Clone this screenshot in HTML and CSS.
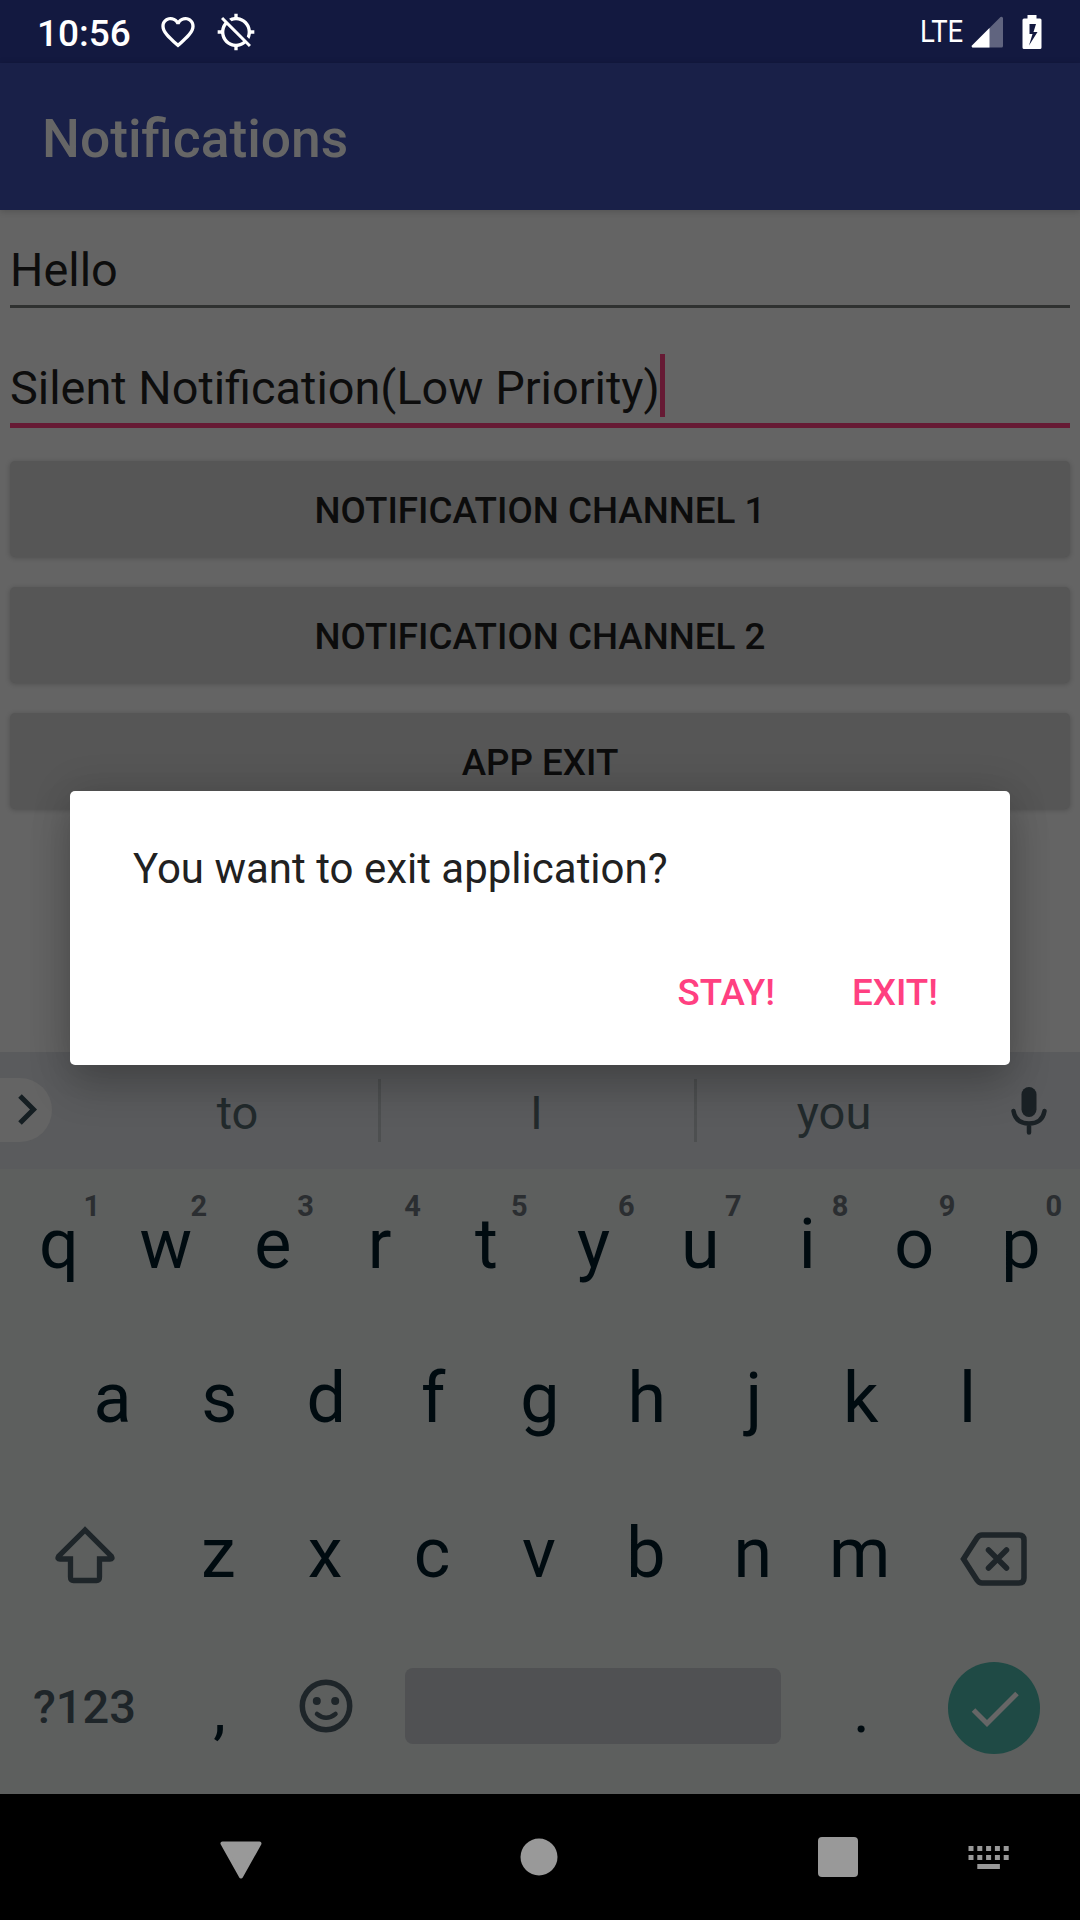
FILE: index.html
```html
<!DOCTYPE html>
<html lang="en">
<head>
<meta charset="utf-8">
<title>Notifications</title>
<link rel="stylesheet" href="styles.css">
</head>
<body>
<div class="screen">
  <header class="status">
    <span class="clock">10:56</span>
    <svg class="heart" width="40" height="40" viewBox="0 0 24 24"><path fill="#fff" d="M16.5 3c-1.740 0-3.410.810-4.500 2.090C10.910 3.810 9.240 3 7.500 3 4.420 3 2 5.420 2 8.500c0 3.780 3.400 6.860 8.550 11.540L12 21.350l1.450-1.320C18.600 15.360 22 12.280 22 8.500 22 5.420 19.580 3 16.500 3zm-4.400 15.550l-.1.100-.1-.1C7.140 14.240 4 11.390 4 8.500 4 6.500 5.500 5 7.500 5c1.540 0 3.040.990 3.570 2.360h1.870C13.460 5.990 14.960 5 16.500 5c2 0 3.500 1.500 3.500 3.500 0 2.890-3.140 5.740-7.900 10.050z"/></svg>
    <svg class="gps" width="40" height="40" viewBox="0 0 24 24"><path fill="#fff" d="M20.940 11c-.460-4.170-3.770-7.480-7.940-7.940V1h-2v2.060c-1.130.120-2.190.460-3.160.970l1.500 1.500C10.160 5.190 11.060 5 12 5c3.870 0 7 3.130 7 7 0 .940-.190 1.840-.520 2.650l1.500 1.500c.5-.960.840-2.020.970-3.150H23v-2h-2.060zM3 4.270l2.040 2.040C3.970 7.620 3.250 9.230 3.060 11H1v2h2.060c.460 4.170 3.770 7.480 7.940 7.940V23h2v-2.060c1.770-.2 3.380-.910 4.690-1.980L19.730 21 21 19.730 4.270 3 3 4.270zm13.270 13.270C15.090 18.450 13.610 19 12 19c-3.870 0-7-3.130-7-7 0-1.610.550-3.090 1.460-4.270l9.810 9.810z"/></svg>
    <span class="lte">LTE</span>
    <svg class="signal" width="32" height="32" viewBox="0 0 32 32"><path fill="#fff" fill-opacity=".33" d="M32 2v28q0 1.500-1.500 1.500H1.500Q0 31 1 29.500L29.500 1Q31 0 32 2z"/><path fill="#fff" d="M18.500 12v19.500H1.500Q0 31 1 29.500z"/></svg>
    <svg class="battery" width="20" height="34" viewBox="0 0 20 34"><path fill="#fff" fill-rule="evenodd" d="M5.500 0h9v3.500H18q1.500 0 1.500 1.500v27.500Q19.500 34 18 34H2Q.500 34 .500 32.500V5Q.500 3.500 2 3.500h3.500zM7.500 9v10h3L7 30.500 15.500 17H11.500L14 9z"/></svg>
  </header>
  <div class="appbar"><h1>Notifications</h1></div>

  <main class="content">
    <div class="field">Hello</div>
    <div class="field focused">Silent Notification(Low Priority)<i class="caret"></i></div>
    <div class="buttons">
      <div class="button">NOTIFICATION CHANNEL 1</div>
      <div class="button">NOTIFICATION CHANNEL 2</div>
      <div class="button">APP EXIT</div>
    </div>
  </main>

  <section class="keyboard">
    <div class="strip">
      <div class="more"><svg width="52" height="64" viewBox="0 0 52 64"><path d="M20 18l13.500 13.500L20 45" fill="none" stroke="#151e22" stroke-width="5"/></svg></div>
      <span class="word first">to</span>
      <span class="word mid">I</span>
      <span class="word last">you</span>
      <svg class="mic" width="36" height="48" viewBox="0 0 36 48"><rect x="10.500" y="0" width="15" height="30" rx="7.500" fill="#1a2125"/><path d="M2.500 24C4 33 10 36.500 18 36.500S32 33 33.500 24M18 37v8.500" fill="none" stroke="#1a2125" stroke-width="4.500" stroke-linecap="round"/></svg>
    </div>
    <div class="keys">
      <div class="row">
        <span class="key">q<sup>1</sup></span><span class="key">w<sup>2</sup></span><span class="key">e<sup>3</sup></span><span class="key">r<sup>4</sup></span><span class="key">t<sup>5</sup></span><span class="key">y<sup>6</sup></span><span class="key">u<sup>7</sup></span><span class="key">i<sup>8</sup></span><span class="key">o<sup>9</sup></span><span class="key">p<sup>0</sup></span>
      </div>
      <div class="row">
        <span class="key">a</span><span class="key">s</span><span class="key">d</span><span class="key">f</span><span class="key">g</span><span class="key">h</span><span class="key">j</span><span class="key">k</span><span class="key">l</span>
      </div>
      <div class="row third">
        <span class="key wide"><svg class="shift" width="60" height="58" viewBox="0 0 60 58"><path d="M30 4L3.500 30.500Q2 33 5 33H15.500V51Q15.500 54.500 18.500 54.500H41.500Q44.500 54.500 44.500 51V33H55Q58 33 56.500 30.500Z" fill="none" stroke="#1e2529" stroke-width="5.300"/></svg></span>
        <span class="key">z</span><span class="key">x</span><span class="key">c</span><span class="key">v</span><span class="key">b</span><span class="key">n</span><span class="key">m</span>
        <span class="key wide"><svg class="del" width="68" height="54" viewBox="0 0 68 54"><path d="M3.500 27L17 6Q19 3 22 3H59Q64 3 64 8V46Q64 51 59 51H22Q19 51 17 48ZM28.500 18l18 18M46.500 18l-18 18" fill="none" stroke="#1e2529" stroke-width="5.500" stroke-linecap="round"/></svg></span>
      </div>
      <div class="row bottom">
        <span class="key wide symbols">?123</span>
        <span class="key punct">,</span>
        <span class="key"><svg class="smile" width="54" height="54" viewBox="0 0 54 54"><circle cx="27" cy="27" r="23.700" fill="none" stroke="#1e2529" stroke-width="5.500"/><circle cx="17.800" cy="22" r="4" fill="#1e2529"/><circle cx="36.200" cy="22" r="4" fill="#1e2529"/><path d="M18 35q9 7.500 18.500 0" fill="none" stroke="#1e2529" stroke-width="4.500" stroke-linecap="round"/></svg></span>
        <span class="space"></span>
        <span class="key punct">.</span>
        <span class="key wide"><svg class="done" width="92" height="92" viewBox="0 0 92 92"><circle cx="46" cy="46" r="46" fill="#1f4a45"/><path d="M25.500 48l13.500 13.500L69 31.500" fill="none" stroke="#666" stroke-width="5"/></svg></span>
      </div>
    </div>
  </section>

  <nav class="navbar">
    <svg width="42" height="38" viewBox="0 0 42 38"><path d="M2.500 2.500H39.500L21 35.500Z" fill="#999" stroke="#999" stroke-width="4" stroke-linejoin="round"/></svg>
    <svg width="38" height="38" viewBox="0 0 38 38"><circle cx="19" cy="19" r="18.500" fill="#999"/></svg>
    <svg width="40" height="40" viewBox="0 0 40 40"><rect width="40" height="40" rx="4" fill="#999"/></svg>
    <svg width="41" height="24" viewBox="0 0 41 24"><path fill="#999" d="M.5 0h5v5h-5zM9.300 0h5v5h-5zM18.100 0h5v5h-5zM26.900 0h5v5h-5zM35.700 0h5v5h-5zM.5 9h5v5h-5zM9.300 9h5v5h-5zM18.100 9h5v5h-5zM26.900 9h5v5h-5zM35.700 9h5v5h-5zM9.300 18h22.600v5H9.300z"/></svg>
  </nav>

  <div class="dialog" role="dialog">
    <p>You want to exit application?</p>
    <div class="actions"><span>STAY!</span><span>EXIT!</span></div>
  </div>
</div>
</body>
</html>
```
FILE: styles.css
```css
* { box-sizing: border-box; }

body {
  margin: 0;
  font-family: Roboto, "Liberation Sans", sans-serif;
}

svg { display: block; flex: none; }

.screen {
  position: relative;
  display: flex;
  flex-direction: column;
  width: 1080px;
  height: 1920px;
  overflow: hidden;
  background: #646464;
}

/* Status bar */
.status {
  display: flex;
  align-items: center;
  height: 63px;
  padding: 0 38px 0 37px;
  background: #131940;
  color: #fff;
}
.clock {
  width: 121px;
  padding-top: 3px;
  font-size: 37px;
  font-weight: 500;
}
.gps { margin-left: 18px; }
.lte {
  width: 45px;
  margin-left: auto;
  font-size: 32px;
  line-height: 63px;
  transform: scaleX(.86);
  transform-origin: 0 50%;
}
.signal { margin-left: 6px; }
.battery { margin-left: 19px; }

/* App bar */
.appbar {
  position: relative;
  display: flex;
  align-items: center;
  height: 147px;
  padding: 3px 42px 0;
  background: #192048;
  box-shadow: 0 1px 7px rgba(0, 0, 0, .2);
}
.appbar h1 {
  margin: 0;
  color: #666;
  font-size: 53.400px;
  font-weight: 500;
}

/* Form */
.content {
  height: 842px;
  padding: 32px 10px 0;
}
.field {
  display: flex;
  padding-bottom: 7px;
  border-bottom: 3px solid #2f3130;
  color: #0d0d0d;
  font-size: 46.850px;
  line-height: 56px;
}
.field.focused {
  margin-top: 52px;
  border-bottom: 5px solid #661a34;
}
.caret {
  width: 5px;
  height: 63px;
  margin: -6px 0 -1px;
  background: #661a34;
}
.buttons {
  display: flex;
  flex-direction: column;
  gap: 30px;
  margin-top: 33px;
}
.button {
  display: flex;
  align-items: center;
  justify-content: center;
  height: 96px;
  padding-top: 3px;
  border-radius: 5px;
  background: #565656;
  box-shadow: 0 1px 5px rgba(0, 0, 0, .22);
  color: #0c0c0c;
  font-size: 36.750px;
  font-weight: 500;
}

/* Keyboard */
.keyboard {
  height: 742px;
  background: #5d5f5e;
}
.strip {
  display: flex;
  align-items: center;
  height: 117px;
  padding: 0 33px 0 0;
  background: #5a5b5d;
}
.more {
  width: 52px;
  height: 64px;
  margin: 0 0 1px;
  border-radius: 0 32px 32px 0;
  background: #646464;
}
.word {
  height: 63px;
  color: #222a2c;
  font-size: 47px;
  line-height: 67px;
  text-align: center;
}
.first { width: 329px; padding-left: 45px; border-right: 3px solid #4d4f50; }
.mid { width: 316px; padding-right: 2px; border-right: 3px solid #4d4f50; }
.last { width: 274px; }
.mic { margin-left: auto; }

.keys {
  display: grid;
  grid-template-rows: 150px 158px 152px 165px;
}
.row {
  display: flex;
  align-items: center;
  justify-content: center;
  color: #000b10;
  font-size: 70px;
  line-height: 82px;
}
.third { padding-right: 2px; }
.key {
  position: relative;
  display: flex;
  justify-content: center;
  width: 106.900px;
}
.key sup {
  position: absolute;
  left: 78px;
  top: -14px;
  color: #2b2e31;
  font-size: 29px;
  font-weight: 700;
  line-height: 34px;
}
.wide { width: 160.300px; }
.shift { margin: 3px 0 0; }
.del { margin: 12px 0 0 1px; }
.symbols {
  padding: 0 2px 10px 0;
  color: #1e2529;
  font-size: 47px;
  font-weight: 500;
}
.punct {
  padding: 0 0 1px 1px;
  font-size: 64px;
}
.space {
  width: 376px;
  height: 76px;
  margin: 0 26px 12px;
  border-radius: 8px;
  background: #505153;
}
.smile { margin-top: -12px; }
.done { margin-top: -7px; }

/* Navigation bar */
.navbar {
  display: flex;
  align-items: center;
  height: 126px;
  padding-left: 220px;
  background: #000;
}
.navbar svg:nth-child(1) { margin-top: 5px; }
.navbar svg:nth-child(2) { margin-left: 258px; }
.navbar svg:nth-child(3) { margin-left: 260px; }
.navbar svg:nth-child(4) { margin-left: 110px; margin-top: 1px; }

/* Dialog */
.dialog {
  position: absolute;
  left: 70px;
  top: 791px;
  width: 940px;
  height: 274px;
  padding: 53px 72px 0 63px;
  border-radius: 5px;
  background: #fff;
  box-shadow: 0 22px 42px rgba(0, 0, 0, .2), 0 0 40px rgba(0, 0, 0, .14);
}
.dialog p {
  margin: 0;
  color: #212121;
  font-size: 42px;
  line-height: 50px;
}
.actions {
  display: flex;
  justify-content: flex-end;
  gap: 77px;
  margin-top: 77px;
  color: #ff4081;
  font-size: 36.750px;
  font-weight: 500;
  line-height: 44px;
}
```
